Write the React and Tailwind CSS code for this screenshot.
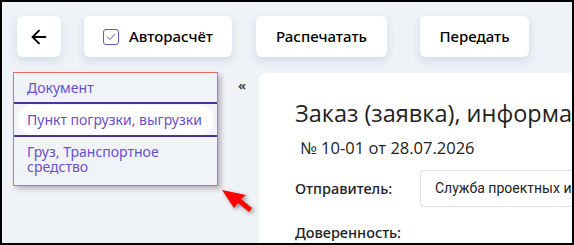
import { ArrowLeft } from "lucide-react";

function Btn({ children, className = "" }) {
  return (
    <button
      className={`h-[41px] rounded-md bg-white shadow-[0_4px_8px_rgba(120,145,185,0.25)] flex items-center justify-center text-[15px] font-medium text-black ${className}`}
    >
      {children}
    </button>
  );
}

export default function App() {
  return (
    <div
      className="relative w-[574px] h-[245px] overflow-hidden border-2 border-black bg-[#eff3f7] flex flex-col"
      style={{ fontFamily: '"Noto Sans", "Open Sans", sans-serif' }}
    >
      {/* Toolbar */}
      <div className="flex items-center pt-[14px] pl-[15px]">
        <Btn className="w-[44px]">
          <ArrowLeft size={22} strokeWidth={2} />
        </Btn>
        <Btn className="w-[148px] ml-[23px] gap-[10px]">
          <span className="w-4 h-4 rounded-[3px] border border-[#6b55c9] flex items-center justify-center">
            <svg width="10" height="8" viewBox="0 0 10 8" fill="none" stroke="#6b55c9" strokeWidth="1">
              <path d="M1 3.5l3 3 5-5.5" />
            </svg>
          </span>
          Авторасчёт
        </Btn>
        <Btn className="w-[131px] ml-[24px]">Распечатать</Btn>
        <Btn className="w-[109px] ml-[33px]">Передать</Btn>
      </div>

      {/* Body */}
      <div className="flex flex-1 mt-[15px] min-h-0">
        <div className="shrink-0 ml-[11px] w-[205px] h-[114px] border border-[#f26a66] bg-[#f0f3f7] shadow-[3px_3px_5px_rgba(0,0,0,0.25)] text-[14px] text-[#6a4fc6] leading-[17px]">
          <div className="h-[31px] flex items-center pl-[13px] border-b-2 border-[#4a3496]">Документ</div>
          <div className="h-[33px] flex items-center border-b-2 border-[#4a3496]">
            <div className="mx-[4px] w-full h-[30px] bg-white rounded-[14px] flex items-center pl-[9px] whitespace-nowrap">
              Пункт погрузки, выгрузки
            </div>
          </div>
          <div className="pl-[13px] pt-[7px] leading-[15px]">
            <div>Груз, Транспортное</div>
            <div>средство</div>
          </div>
        </div>

        <div className="shrink-0 ml-[20px] mt-[7px] text-[#444] text-[13px] font-bold leading-none tracking-[-2px]">«</div>

        <div className="ml-[15px] mt-[1px] flex-1 min-w-0 bg-white rounded-tl-[6px] pl-[36px] pt-[25px] whitespace-nowrap overflow-hidden">
          <div className="text-[23.5px] text-[#222] leading-[30px]" style={{ fontFamily: '"Open Sans", sans-serif' }}>
            Заказ (заявка), информация
          </div>
          <div className="mt-[9px] ml-[5px] text-[16.5px] text-[#222] leading-[22px]" style={{ fontFamily: '"Open Sans", sans-serif' }}>
            № 10-01 от 28.07.2026
          </div>
          <div className="flex items-center mt-[11px]">
            <div className="w-[125px] shrink-0 text-[14.5px] font-medium text-[#222]">Отправитель:</div>
            <div
              className="h-[37px] flex-1 border border-[#dcdfe4] rounded-l-[4px] border-r-0 flex items-center pl-[14px] text-[14px] text-[#222]"
              style={{ fontFamily: 'Roboto, "Liberation Sans", sans-serif' }}
            >
              Служба проектных и консультационных услуг
            </div>
          </div>
          <div className="mt-[15px] text-[14.5px] font-medium text-[#222] leading-[20px]">Доверенность:</div>
        </div>
      </div>

      {/* annotation arrow */}
      <svg
        className="absolute left-[216px] top-[184px] drop-shadow-[2px_2px_2px_rgba(0,0,0,0.4)]"
        width="40"
        height="32"
        viewBox="0 0 40 32"
      >
        <polygon points="4,4 28,9 23,13 34,22 31,26 20,17 16,22" fill="#ff0000" />
      </svg>
    </div>
  );
}
